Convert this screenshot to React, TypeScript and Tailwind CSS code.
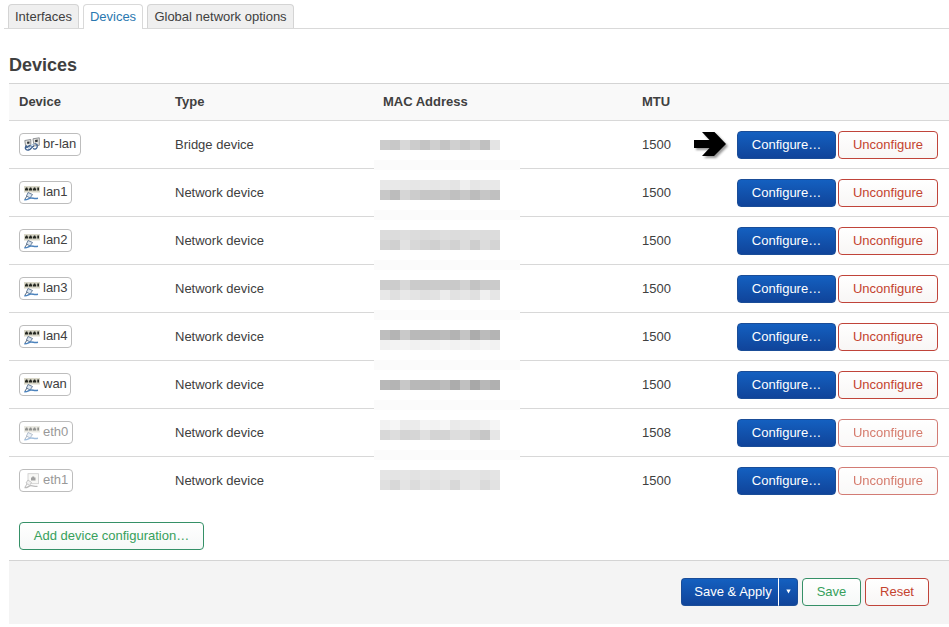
type Kind = 'bridge' | 'port' | 'down';

const devices: { name: string; kind: Kind; type: string; mtu: number; present: boolean; width: string }[] = [
  { name: 'br-lan', kind: 'bridge', type: 'Bridge device', mtu: 1500, present: true, width: 'w-[62px]' },
  { name: 'lan1', kind: 'port', type: 'Network device', mtu: 1500, present: true, width: 'w-[53px]' },
  { name: 'lan2', kind: 'port', type: 'Network device', mtu: 1500, present: true, width: 'w-[53px]' },
  { name: 'lan3', kind: 'port', type: 'Network device', mtu: 1500, present: true, width: 'w-[53px]' },
  { name: 'lan4', kind: 'port', type: 'Network device', mtu: 1500, present: true, width: 'w-[53px]' },
  { name: 'wan', kind: 'port', type: 'Network device', mtu: 1500, present: true, width: 'w-[52px]' },
  { name: 'eth0', kind: 'port', type: 'Network device', mtu: 1508, present: false, width: 'w-[54px]' },
  { name: 'eth1', kind: 'down', type: 'Network device', mtu: 1500, present: false, width: 'w-[54px]' },
];

// Redaction bands, 10px each: grey levels, "strip" for a faint full-width band, or empty.
const bands: string[] = [
  'cc c8 d8 cc c4 cf c4 d0 c8 d0 c0 e4',
  '',
  'strip',
  '',
  'e8 e9 e8 e6 e8 e6 e8 e4 ef e6 e9 e8',
  'c8 bc d6 cc c6 c6 c8 c0 c8 bc c6 c0',
  '',
  'strip',
  '',
  'dc dc de dc da dc de dc dc de dc dc',
  'd4 d0 e2 d8 d4 d0 d8 d2 dc ce dc d4',
  '',
  'strip',
  '',
  'cc cc d8 cb ca cb ca c9 d2 c3 cb cb',
  'e8 e0 e8 e4 e0 e2 ec e2 e6 e0 f0 e6',
  '',
  'strip',
  '',
  'be b4 c9 b9 b8 b8 bb b3 c4 ac bb b4',
  'f1 f3 f4 f1 f3 f2 f5 f2 f4 f1 f5 f2',
  '',
  'strip',
  '',
  'b8 b4 c8 b8 b8 b6 bc ac c0 a8 b8 b0',
  '',
  'strip',
  '',
  'f2 f6 eb eb f4 f2 f6 ea ed eb ef f5',
  'd8 dd d4 d6 e0 d4 d4 dd dd d0 c6 e6',
  '',
  'strip',
  '',
  'e5 e4 e5 e2 e5 e3 e5 e4 e5 e5 e2 e4',
  'e0 d8 e4 dc e4 e0 e4 d8 e6 e6 da e2',
];

function Redaction() {
  return (
    <div className="pointer-events-none absolute left-[365px] top-[57px] w-[146px]">
      {bands.map((band, i) => {
        if (band === 'strip') return <div key={i} className="h-[10px] bg-[#fbfbfb]" />;
        if (band === '') return <div key={i} className="h-[10px]" />;
        return (
          <div key={i} className="ml-[6px] flex h-[10px]">
            {band.split(' ').map((g, j) => (
              <div key={j} className="w-[10px]" style={{ background: `#${g}${g}${g}` }} />
            ))}
          </div>
        );
      })}
    </div>
  );
}

function DeviceIcon({ kind }: { kind: Kind }) {
  if (kind === 'bridge') {
    return (
      <svg width="16" height="16" viewBox="0 0 16 16" fill="none">
        <path d="M.8 3.500l6-1v7l-5 .8z" fill="#e6e6e2" stroke="#85888c" strokeWidth=".9" />
        <path d="M9 1.800l6.300-1v7.500l-5.300.7z" fill="#e6e6e2" stroke="#85888c" strokeWidth=".9" />
        <path d="M3 4.800l2.500-.4v2L3.400 7zM11 3l2.700-.4v2.200l-2.400.4z" fill="#2f3338" />
        <path d="M3 8.500c-3 2-1.500 5 1.500 4.500 3-.5 3-3.500 5.500-4 M2.500 10.800l3-2.300 2 1 M9 11.500c3 1.500 5-.5 4-4l-2.500-1" stroke="#3b5f90" strokeWidth="1.300" />
        <path d="M4 11.500c2 0 2.500-3.500 5.500-4.500" stroke="#a9c8ea" strokeWidth="1" />
      </svg>
    );
  }
  if (kind === 'down') {
    return (
      <svg width="16" height="16" viewBox="0 0 16 16" fill="none">
        <rect x="4" y=".7" width="10.500" height="10" fill="#f2f2ee" stroke="#999" strokeWidth=".8" />
        <path d="M7 4.500h1.200v-1h2v1h1.300V7.500H7z" fill="#444" />
        <path d="M.5 14.700c3.500.3 4-2 6.500-2s3.500 1 6.500.7" stroke="#777" strokeWidth="1.200" />
        <path d="M2 10l2-3 3.500 2.500-2 3z" fill="#e2e2e2" stroke="#777" strokeWidth=".8" />
        <path d="M1 14l2-3" stroke="#777" />
      </svg>
    );
  }
  return (
    <svg width="16" height="16" viewBox="0 0 16 16" fill="none">
      <rect x="0" y="1" width="16" height="6.500" fill="#d9d7c8" />
      <path d="M1 5.500V3.500h.8V2.500h1.600v1h.8v2zM5 5.500V3.500h.8V2.500h1.600v1h.8v2zM9 5.500V3.500h.8V2.500h1.600v1h.8v2zM13.300 5.500v-3h1.700v3z" fill="#23261f" />
      <path d="M2.500 11l1.500-3.500 4.500 2-2.500 3.500z" fill="#dbe5ee" stroke="#5d7593" strokeWidth=".9" />
      <path d="M.3 14.800c3.700.3 4.200-1.800 6.700-1.800s3.500.8 7 .2" stroke="#4c83bd" strokeWidth="1.500" />
      <path d="M1 14l2-3" stroke="#596a7d" />
    </svg>
  );
}

const button = 'flex h-[28px] items-center justify-center rounded-[4px] border pb-px';
const blue = 'border-[#1a4d98] bg-linear-to-b from-[#1460c0] to-[#10449a] text-white';
const red = 'border-[#c0443a] bg-linear-to-b from-white to-[#f8f6f5] text-[#c4432f]';
const green = 'border-[#359067] bg-linear-to-b from-white to-[#f6f8f7] text-[#37a05b]';
const row = 'flex h-[48px] items-center pl-[10px] pr-[11px]';

export default function App() {
  return (
    <div className="h-[627px] overflow-hidden bg-white font-['Liberation_Sans',Arial,sans-serif] text-[13px] leading-[18px] text-[#404040]">
      <nav className="ml-1 flex h-[29px] items-end gap-1 border-b border-[#d9d9d9] pl-1">
        <div className="h-[24px] w-[71px] rounded-t-[4px] border border-b-0 border-[#d4d4d4] bg-[#efefef] pt-[3px] text-center">Interfaces</div>
        <div className="-mb-px h-[25px] w-[60px] rounded-t-[4px] border border-b-0 border-[#d9d9d9] bg-white pt-[3px] text-center text-[#2a78b0]">Devices</div>
        <div className="h-[24px] w-[147px] rounded-t-[4px] border border-b-0 border-[#d4d4d4] bg-[#efefef] pt-[3px] text-center">Global network options</div>
      </nav>

      <h3 className="ml-[9px] mt-[18px] h-[36px] text-[18px] font-bold leading-[36px]">Devices</h3>

      <section className="relative ml-[9px]">
        <header className="flex h-[37px] items-center border-t border-[#d4d4d4] bg-[#f9f9f9] pl-[10px] font-bold">
          <div className="w-[156px]">Device</div>
          <div className="w-[208px]">Type</div>
          <div className="w-[259px]">MAC Address</div>
          <div>MTU</div>
        </header>
        {devices.map((d, i) => (
          <div key={d.name} className={`${row} border-t border-[#d8d8d8]`}>
            <div className="flex w-[156px]">
              <span className={`mb-px flex h-[23px] items-center rounded-[4px] border border-[#bdbdbd] bg-white ${d.width} ${d.present ? '' : 'text-[#999]'}`}>
                <span className={`flex pl-[4px] pt-px ${d.present ? '' : 'opacity-50'}`}>
                  <DeviceIcon kind={d.kind} />
                </span>
                <span className="pb-px pl-[3px]">{d.name}</span>
              </span>
            </div>
            <div className="w-[467px]">{d.type}</div>
            <div className="w-[52px]">{d.mtu}</div>
            <div className="flex w-[43px] pb-px">
              {i === 0 && (
                <svg width="38" height="32" viewBox="0 0 38 32" className="drop-shadow-[2px_2px_1px_rgba(0,0,0,0.4)]">
                  <path d="M0 12h15.500L8 4h12.500L32 16 20 28H8l7.500-8H0z" fill="#000" />
                </svg>
              )}
            </div>
            <div className="flex gap-[2px] pt-px">
              <div className={`${button} ${blue} w-[99px]`}>Configure…</div>
              <div className={`${button} ${red} w-[100px] ${d.present ? '' : 'opacity-70'}`}>Unconfigure</div>
            </div>
          </div>
        ))}
        <Redaction />
      </section>

      <div className="ml-[19px] mt-[18px] flex">
        <div className={`${button} ${green} w-[185px]`}>Add device configuration…</div>
      </div>

      <footer className="ml-[9px] mt-[10px] flex h-[64px] items-start justify-end gap-[4px] border-t border-[#d4d4d4] bg-[#f4f4f4] pr-[20px] pt-[17px]">
        <div className="flex">
          <div className={`${button} ${blue} w-[98px] rounded-r-none border-r-white pl-[6px]`}>Save &amp; Apply</div>
          <div className={`${button} ${blue} w-[19px] rounded-l-none border-l-0`}>
            <svg width="5" height="5" viewBox="0 0 5 5"><path d="M.3 .5h4.400L2.500 4.500z" fill="#fff" /></svg>
          </div>
        </div>
        <div className={`${button} ${green} w-[59px]`}>Save</div>
        <div className={`${button} ${red} w-[64px]`}>Reset</div>
      </footer>
    </div>
  );
}
